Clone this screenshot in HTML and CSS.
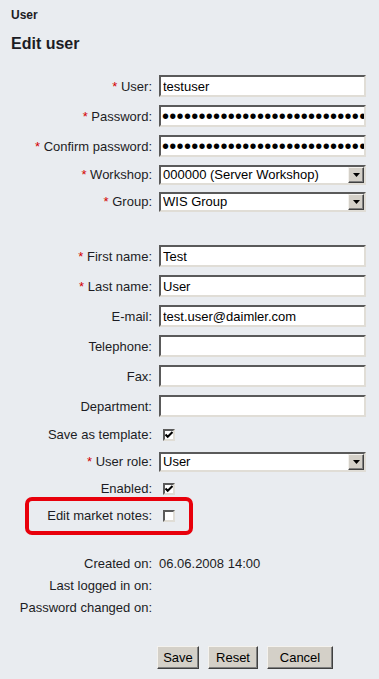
FILE: index.html
```html
<!DOCTYPE html>
<html lang="en">
<head>
    <meta charset="UTF-8">
    <meta name="viewport" content="width=device-width, initial-scale=1.0">
    <title>Edit user</title>
    <link rel="stylesheet" href="styles.css">
</head>
<body>
    <div class="page">
        <div class="crumb">User</div>
        <h1>Edit user</h1>

        <form class="form">
            <div class="row">
                <label for="user"><span class="req">*</span> User:</label>
                <input class="text" type="text" id="user" value="testuser">
            </div>
            <div class="row">
                <label for="pw"><span class="req">*</span> Password:</label>
                <input class="text pw" type="password" id="pw" value="xxxxxxxxxxxxxxxxxxxxxxxxxxxxxxxxxx">
            </div>
            <div class="row">
                <label for="pw2"><span class="req">*</span> Confirm password:</label>
                <input class="text pw" type="password" id="pw2" value="xxxxxxxxxxxxxxxxxxxxxxxxxxxxxxxxxx">
            </div>
            <div class="row short">
                <label for="workshop"><span class="req">*</span> Workshop:</label>
                <div class="select-wrap">
                    <select id="workshop"><option>000000 (Server Workshop)</option></select>
                    <span class="arrow"><svg width="7" height="4" viewBox="0 0 7 4"><path d="M0 0h7L3.5 4z" fill="#000"/></svg></span>
                </div>
            </div>
            <div class="row short">
                <label for="group"><span class="req">*</span> Group:</label>
                <div class="select-wrap">
                    <select id="group"><option>WIS Group</option></select>
                    <span class="arrow"><svg width="7" height="4" viewBox="0 0 7 4"><path d="M0 0h7L3.5 4z" fill="#000"/></svg></span>
                </div>
            </div>

            <div class="spacer"></div>

            <div class="row">
                <label for="first"><span class="req">*</span> First name:</label>
                <input class="text" type="text" id="first" value="Test">
            </div>
            <div class="row">
                <label for="last"><span class="req">*</span> Last name:</label>
                <input class="text" type="text" id="last" value="User">
            </div>
            <div class="row">
                <label for="email">E-mail:</label>
                <input class="text" type="text" id="email" value="test.user@daimler.com">
            </div>
            <div class="row">
                <label for="phone">Telephone:</label>
                <input class="text" type="text" id="phone">
            </div>
            <div class="row">
                <label for="fax">Fax:</label>
                <input class="text" type="text" id="fax">
            </div>
            <div class="row">
                <label for="dept">Department:</label>
                <input class="text" type="text" id="dept">
            </div>
            <div class="row short">
                <label>Save as template:</label>
                <span class="check"><svg width="8" height="8" viewBox="0 0 8 8"><path d="M0.5 3.5l2.2 2.3L7.5 1" fill="none" stroke="#000" stroke-width="2"/></svg></span>
            </div>
            <div class="row short">
                <label for="role"><span class="req">*</span> User role:</label>
                <div class="select-wrap">
                    <select id="role"><option>User</option></select>
                    <span class="arrow"><svg width="7" height="4" viewBox="0 0 7 4"><path d="M0 0h7L3.5 4z" fill="#000"/></svg></span>
                </div>
            </div>
            <div class="row short">
                <label>Enabled:</label>
                <span class="check"><svg width="8" height="8" viewBox="0 0 8 8"><path d="M0.5 3.5l2.2 2.3L7.5 1" fill="none" stroke="#000" stroke-width="2"/></svg></span>
            </div>
            <div class="row short marked">
                <label>Edit market notes:</label>
                <span class="check"></span>
            </div>

            <div class="spacer small"></div>

            <div class="row info">
                <label>Created on:</label>
                <span class="value">06.06.2008 14:00</span>
            </div>
            <div class="row info">
                <label>Last logged in on:</label>
                <span class="value"></span>
            </div>
            <div class="row info">
                <label>Password changed on:</label>
                <span class="value"></span>
            </div>

            <div class="buttons">
                <button type="button" class="save">Save</button>
                <button type="button" class="reset">Reset</button>
                <button type="button" class="cancel">Cancel</button>
            </div>
        </form>
    </div>
</body>
</html>
```

FILE: styles.css
```css
body {
    margin: 0;
    background-color: #e9ecf0;
    font-family: "Liberation Sans", Arial, sans-serif;
    font-size: 13px;
    color: #1c1c24;
}
.page {
    padding: 8px 0 0 11px;
}
.crumb {
    font-size: 12px;
    font-weight: bold;
    line-height: 15px;
}
h1 {
    font-size: 16px;
    font-weight: bold;
    margin: 11px 0 0;
    line-height: 20px;
}
.form {
    margin-top: 17px;
    margin-left: -11px;
}
.row {
    display: flex;
    align-items: center;
    height: 30px;
}
.row.short {
    height: 27px;
}
.row.info {
    height: 22px;
}
.row label {
    width: 152px;
    text-align: right;
    flex-shrink: 0;
    margin-right: 7px;
}
.req {
    color: #d40000;
}
.text {
    box-sizing: border-box;
    width: 207px;
    height: 22px;
    margin: 0;
    padding: 1px 2px;
    font-family: "Liberation Sans", Arial, sans-serif;
    font-size: 13px;
    color: #000;
    background: #fff;
    border: 2px solid;
    border-color: #5a5a5a #e0ddd6 #e0ddd6 #5a5a5a;
    outline: none;
}
.text.pw {
    font-size: 20px;
    letter-spacing: 0.3px;
    padding: 0 0 0 1px;
}
.select-wrap {
    position: relative;
    width: 207px;
    height: 20px;
}
.select-wrap select {
    box-sizing: border-box;
    width: 100%;
    height: 100%;
    margin: 0;
    padding: 0 0 0 2px;
    -webkit-appearance: none;
    appearance: none;
    font-family: "Liberation Sans", Arial, sans-serif;
    font-size: 13px;
    color: #000;
    background: #fff;
    border: 2px solid;
    border-color: #5a5a5a #e0ddd6 #e0ddd6 #5a5a5a;
    border-radius: 0;
    outline: none;
}
.arrow {
    position: absolute;
    top: 2px;
    right: 2px;
    box-sizing: border-box;
    width: 16px;
    height: 16px;
    display: flex;
    align-items: center;
    justify-content: center;
    background: #d4d0c8;
    border: 1px solid;
    border-color: #f4f2ee #404040 #404040 #f4f2ee;
    box-shadow: inset -1px -1px 0 #808080;
}
.check {
    box-sizing: border-box;
    width: 12px;
    height: 12px;
    margin-left: 4px;
    display: flex;
    align-items: center;
    justify-content: center;
    background: #fff;
    border: 2px solid;
    border-color: #5a5a5a #e0ddd6 #e0ddd6 #5a5a5a;
}
.marked {
    position: relative;
}
.marked::after {
    content: "";
    position: absolute;
    left: 25px;
    top: -5px;
    width: 168px;
    height: 38px;
    box-sizing: border-box;
    border: 4px solid #e8000b;
    border-radius: 7px;
}
.spacer {
    height: 26px;
}
.spacer.small {
    height: 23px;
}
.value {
    color: #1c1c24;
}
.buttons {
    display: flex;
    margin: 28px 0 0 157px;
}
.buttons button {
    box-sizing: border-box;
    height: 23px;
    margin-right: 9px;
    padding: 0;
    font-family: "Liberation Sans", Arial, sans-serif;
    font-size: 13px;
    color: #000;
    background: #d4d0c8;
    border: 1px solid;
    border-color: #f4f2ee #404040 #404040 #f4f2ee;
    box-shadow: inset -1px -1px 0 #808080;
    cursor: pointer;
}
.buttons .save {
    width: 42px;
}
.buttons .reset {
    width: 50px;
}
.buttons .cancel {
    width: 66px;
}
```
